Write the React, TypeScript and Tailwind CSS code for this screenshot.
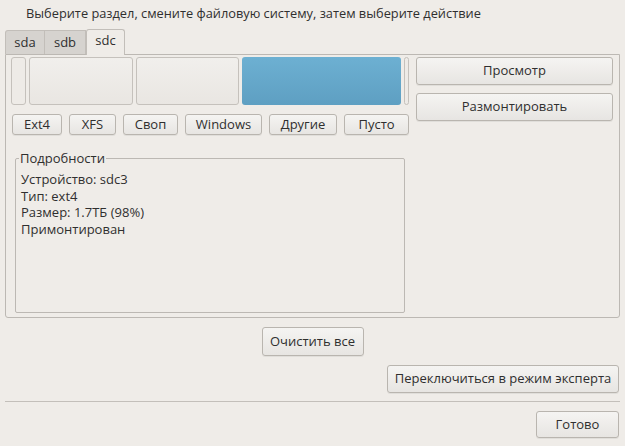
import React from "react";

const btn =
  "flex items-center justify-center border border-[#b9b5af] rounded-[3px] bg-gradient-to-b from-[#f5f4f2] to-[#e7e5e2] shadow-[0_1px_0_rgba(0,0,0,0.06)] text-[#2f2f2f]";

export default function App() {
  return (
    <div
      className="w-[625px] h-[446px] bg-[#efece8] text-[13px] text-[#2f2f2f] flex flex-col overflow-hidden"
      style={{ fontFamily: '"Open Sans", "Noto Sans", sans-serif' }}
    >
      <div className="h-[29px] pl-[26px] pt-[4px] leading-[18px] text-[12.8px]">
        Выберите раздел, смените файловую систему, затем выберите действие
      </div>
      {/* tabs */}
      <div className="flex items-end h-[25px] pl-[5px]">
        <div className="w-[40px] h-[24px] bg-[#d6d3cf] border border-[#c2beb9] border-b-0 rounded-tl-[3px] flex items-center justify-center">
          sda
        </div>
        <div className="w-[41px] h-[24px] bg-[#d6d3cf] border border-[#c2beb9] border-l-0 border-b-0 flex items-center justify-center">
          sdb
        </div>
        <div className="w-[39px] h-[26px] mb-[-1px] relative z-10 bg-[#efece8] border border-[#c2beb9] border-b-0 rounded-t-[3px] flex items-center justify-center pb-[3px]">
          sdc
        </div>
      </div>
      {/* panel */}
      <div className="ml-[5px] w-[615px] h-[264px] border border-[#bcb8b3] rounded-b-[3px] flex pt-[2px] pl-[5px]">
        <div className="w-[398px] flex flex-col">
          <div className="flex gap-[3px] h-[48px]">
            <div className="w-[15px] rounded-[3px] border border-[#c5c1bc] bg-[#eeebe7]" />
            <div className="w-[104px] rounded-[3px] border border-[#c5c1bc] bg-gradient-to-b from-[#f1efec] to-[#e9e6e2]" />
            <div className="w-[103px] rounded-[3px] border border-[#c5c1bc] bg-gradient-to-b from-[#f1efec] to-[#e9e6e2]" />
            <div className="w-[159px] rounded-[3px] bg-gradient-to-b from-[#6db0d2] to-[#5e9fc2]" />
            <div className="w-[5px] rounded-[3px] border border-[#c5c1bc] bg-[#eeebe7]" />
          </div>
          <div className="flex justify-between mt-[9px] pl-[1px] h-[21px]">
            <div className={`${btn} w-[50px]`}>Ext4</div>
            <div className={`${btn} w-[47px]`}>XFS</div>
            <div className={`${btn} w-[55px]`}>Своп</div>
            <div className={`${btn} w-[77px]`}>Windows</div>
            <div className={`${btn} w-[68px]`}>Другие</div>
            <div className={`${btn} w-[65px]`}>Пусто</div>
          </div>
          <div className="relative mt-[23px] ml-[4px] w-[390px] h-[155px] border border-[#bcb8b3] rounded-[2px] pl-[5px] pt-[12px] leading-[16.7px]">
            <div className="absolute left-[3px] top-[-10px] bg-[#efece8] pl-[1px] pr-[1px] leading-[18px]">
              Подробности
            </div>
            <div>Устройство: sdc3</div>
            <div>Тип: ext4</div>
            <div>Размер: 1.7ТБ (98%)</div>
            <div>Примонтирован</div>
          </div>
        </div>
        <div className="ml-[7px] w-[197px] flex flex-col gap-[8px]">
          <div className={`${btn} h-[28px]`}>Просмотр</div>
          <div className={`${btn} h-[28px]`}>Размонтировать</div>
        </div>
      </div>
      <div className="flex justify-center mt-[9px]">
        <div className={`${btn} w-[102px] h-[29px]`}>Очистить все</div>
      </div>
      <div className="flex justify-end pr-[6px] mt-[9px]">
        <div className={`${btn} w-[232px] h-[28px]`}>Переключиться в режим эксперта</div>
      </div>
      <div className="ml-[5px] w-[615px] h-[1px] bg-[#c3bfba] mt-[8px]" />
      <div className="flex justify-end pr-[6px] mt-[9px]">
        <div className={`${btn} w-[83px] h-[27px]`}>Готово</div>
      </div>
    </div>
  );
}
